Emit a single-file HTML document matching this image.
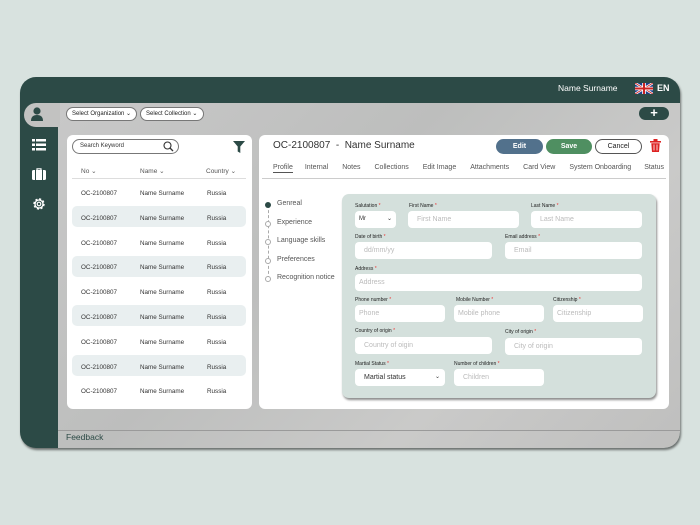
<!DOCTYPE html>
<html><head><style>
*{box-sizing:border-box;margin:0;padding:0}
body{width:700px;height:525px;background:#d8e2df;position:relative;font-family:"Liberation Sans",sans-serif;overflow:hidden}
.a{position:absolute}
.frame{left:20px;top:77px;width:660px;height:371px;background:#2c4a46;border-radius:16px;overflow:hidden;box-shadow:1px 2px 2px rgba(0,0,0,.5)}
.gray{left:38px;top:26px;width:622px;height:345px;background:linear-gradient(135deg,#c8c8c8,#bdbebd 40%,#cacac9 70%,#bfbfbe)}
.tab{left:4px;top:26px;width:36px;height:24px;background:#c2c2c1;border-radius:12px 0 0 12px}
.pill{height:14px;border:1px solid #777;border-radius:8px;background:#fff;font-size:6px;line-height:12px;padding-left:5px;color:#222}
.panel{background:#fff;border-radius:6px}
.t{font-size:6.5px;color:#333}
.row{left:72px;width:174px;height:21px;border-radius:5px}
.hl{background:#e9eff0}
.lbl{font-size:5px;color:#222}
.lbl b{color:#e33;font-weight:normal}
.in{background:#fff;border-radius:4px;height:17px;font-size:7px;color:#bbb;line-height:17px;padding-left:9px}
.btn{height:15px;border-radius:8px;font-size:7px;font-weight:bold;color:#fff;text-align:center;line-height:15px}
.col div{height:24.8px}
</style></head><body>
<div class="a frame">
 <div class="a gray"></div>
 <div class="a tab"></div>
 <div class="a" style="left:538px;top:6px;font-size:8.5px;color:#fff">Name Surname</div>
 <svg class="a" style="left:615px;top:6px" width="18" height="11" viewBox="0 0 18 11"><rect width="18" height="11" fill="#1f3f8a"/><path d="M0 0L18 11M18 0L0 11" stroke="#fff" stroke-width="2.4"/><path d="M0 0L18 11M18 0L0 11" stroke="#c22" stroke-width="0.9"/><path d="M9 0V11M0 5.5H18" stroke="#fff" stroke-width="3.6"/><path d="M9 0V11M0 5.5H18" stroke="#c22" stroke-width="2"/></svg>
 <div class="a" style="left:637px;top:6px;font-size:9px;color:#fff;font-weight:bold">EN</div>
 <div class="a" style="left:619px;top:30px;width:30px;height:13px;border-radius:7px;background:#2c4a46;color:#fff;font-size:13px;line-height:12px;text-align:center;font-weight:bold">+</div>
 <svg class="a" style="left:10px;top:29px" width="14" height="16" viewBox="0 0 14 16"><circle cx="7" cy="5" r="3.6" fill="#2c4a46"/><path d="M1 15Q1 9 7 9Q13 9 13 15Z" fill="#2c4a46"/></svg>
 <svg class="a" style="left:12px;top:62px" width="14" height="12" viewBox="0 0 14 12"><g fill="#fff"><rect x="0" y="0" width="3" height="2.5"/><rect x="4" y="0" width="10" height="2.5"/><rect x="0" y="4.5" width="3" height="2.5"/><rect x="4" y="4.5" width="10" height="2.5"/><rect x="0" y="9" width="3" height="2.5"/><rect x="4" y="9" width="10" height="2.5"/></g></svg>
 <svg class="a" style="left:12px;top:91px" width="14" height="12" viewBox="0 0 14 12"><path d="M5 2V0.8H9V2" stroke="#fff" fill="none" stroke-width="1.2"/><rect x="0" y="2" width="14" height="10" rx="1.5" fill="#fff"/><path d="M3.5 2V12M10.5 2V12" stroke="#2c4a46" stroke-width="1"/></svg>
 <svg class="a" style="left:12px;top:120px" width="14" height="14" viewBox="0 0 14 14"><circle cx="7" cy="7" r="4.6" fill="none" stroke="#fff" stroke-width="2.2" stroke-dasharray="2 1.6"/><circle cx="7" cy="7" r="4" fill="none" stroke="#fff" stroke-width="1.3"/><circle cx="7" cy="7" r="1.8" fill="none" stroke="#fff" stroke-width="1.2"/></svg>
 <div class="a" style="left:38px;top:353px;width:622px;height:1px;background:#9a9a9a"></div>
 <div class="a" style="left:46px;top:355px;font-size:8.5px;color:#2c4a46">Feedback</div>
</div>
<div class="a pill" style="left:66px;top:107px;width:71px">Select Organization &#8964;</div>
<div class="a pill" style="left:140px;top:107px;width:64px">Select Collection &#8964;</div>

<div class="a panel" style="left:67px;top:135px;width:185px;height:274px"></div>
<div class="a" style="left:72px;top:139px;width:107px;height:15px;border:1px solid #777;border-radius:8px;font-size:6px;line-height:13px;padding-left:7px;color:#333">Search Keyword</div>
<svg class="a" style="left:163px;top:141px" width="11" height="11" viewBox="0 0 11 11"><circle cx="4.5" cy="4.5" r="3.5" fill="none" stroke="#333" stroke-width="1.1"/><path d="M7 7L10 10" stroke="#333" stroke-width="1.3"/></svg>
<svg class="a" style="left:233px;top:141px" width="12" height="12" viewBox="0 0 12 12"><path d="M0 0H12L7.3 5.5V12L4.7 10.5V5.5Z" fill="#2c4a46"/></svg>
<div class="a t" style="left:81px;top:167px;color:#555">No &#8964;</div>
<div class="a t" style="left:140px;top:167px;color:#555">Name &#8964;</div>
<div class="a t" style="left:206px;top:167px;color:#555">Country &#8964;</div>
<div class="a" style="left:72px;top:178px;width:174px;height:1px;background:#ddd"></div>
<div class="a row hl" style="top:206px"></div>
<div class="a row hl" style="top:256px"></div>
<div class="a row hl" style="top:305px"></div>
<div class="a row hl" style="top:355px"></div>
<div class="a t col" style="left:81px;top:188px;line-height:12.4px;font-size:6.3px">
<div>OC-2100807</div><div>OC-2100807</div><div>OC-2100807</div><div>OC-2100807</div><div>OC-2100807</div><div>OC-2100807</div><div>OC-2100807</div><div>OC-2100807</div><div>OC-2100807</div></div>
<div class="a t col" style="left:140px;top:188px;line-height:12.4px;font-size:6.3px">
<div>Name Surname</div><div>Name Surname</div><div>Name Surname</div><div>Name Surname</div><div>Name Surname</div><div>Name Surname</div><div>Name Surname</div><div>Name Surname</div><div>Name Surname</div></div>
<div class="a t col" style="left:207px;top:188px;line-height:12.4px;font-size:6.3px">
<div>Russia</div><div>Russia</div><div>Russia</div><div>Russia</div><div>Russia</div><div>Russia</div><div>Russia</div><div>Russia</div><div>Russia</div></div>

<div class="a panel" style="left:259px;top:135px;width:410px;height:274px"></div>
<div class="a" style="left:273px;top:140px;font-size:10px;color:#333">OC-2100807 &nbsp;-&nbsp; Name Surname</div>
<div class="a btn" style="left:496px;top:139px;width:47px;background:#52718c">Edit</div>
<div class="a btn" style="left:546px;top:139px;width:46px;background:#4f8f61">Save</div>
<div class="a btn" style="left:595px;top:139px;width:47px;background:#fff;border:1px solid #555;color:#222;font-weight:normal;line-height:13px">Cancel</div>
<svg class="a" style="left:650px;top:139px" width="11" height="13" viewBox="0 0 11 13"><rect x="0" y="2" width="11" height="1.6" fill="#d22"/><rect x="3.5" y="0" width="4" height="2" fill="#d22"/><path d="M1.3 4.3H9.7L9 13H2Z" fill="#d22"/><path d="M4 5.5V11.5M7 5.5V11.5" stroke="#fff" stroke-width=".8"/></svg>
<div class="a" style="left:273px;top:164px;font-size:7px;color:#555;white-space:nowrap">
<span style="border-bottom:1px solid #555;padding-bottom:1px">Profile</span><span style="margin-left:12px">Internal</span><span style="margin-left:14px">Notes</span><span style="margin-left:14px">Collections</span><span style="margin-left:14px">Edit Image</span><span style="margin-left:14px">Attachments</span><span style="margin-left:14px">Card View</span><span style="margin-left:14px">System Onboarding</span><span style="margin-left:13px">Status</span></div>
<div class="a" style="left:262px;top:178px;width:404px;height:1px;background:#ccc"></div>
<div class="a" style="left:268px;top:205px;width:0;height:74px;border-left:1px dashed #aaa"></div>
<div class="a" style="left:265px;top:202px;width:6px;height:6px;border-radius:50%;background:#2c4a46"></div>
<div class="a" style="left:265px;top:221px;width:6px;height:6px;border-radius:50%;background:#fff;border:1px solid #aaa"></div>
<div class="a" style="left:265px;top:239px;width:6px;height:6px;border-radius:50%;background:#fff;border:1px solid #aaa"></div>
<div class="a" style="left:265px;top:258px;width:6px;height:6px;border-radius:50%;background:#fff;border:1px solid #aaa"></div>
<div class="a" style="left:265px;top:276px;width:6px;height:6px;border-radius:50%;background:#fff;border:1px solid #aaa"></div>
<div class="a" style="left:277px;top:195px;font-size:7px;color:#555;line-height:18.6px">Genreal<br>Experience<br>Language skills<br>Preferences<br>Recognition notice</div>
<div class="a" style="left:342px;top:194px;width:314px;height:204px;background:#d4e0dc;border-radius:7px;box-shadow:1px 2px 2px rgba(0,0,0,.45)"></div>
<div class="a lbl" style="left:355px;top:203px">Salutation <b>*</b></div>
<div class="a lbl" style="left:409px;top:203px">First Name <b>*</b></div>
<div class="a lbl" style="left:531px;top:203px">Last Name <b>*</b></div>
<div class="a in" style="left:355px;top:211px;width:41px;color:#333;font-size:6px;padding-left:4px">Mr<span style="float:right;margin-right:4px">&#8964;</span></div>
<div class="a in" style="left:408px;top:211px;width:111px">First Name</div>
<div class="a in" style="left:531px;top:211px;width:111px">Last Name</div>
<div class="a lbl" style="left:355px;top:234px">Date of birth <b>*</b></div>
<div class="a lbl" style="left:505px;top:234px">Email address <b>*</b></div>
<div class="a in" style="left:355px;top:242px;width:137px">dd/mm/yy</div>
<div class="a in" style="left:505px;top:242px;width:137px">Email</div>
<div class="a lbl" style="left:355px;top:266px">Address <b>*</b></div>
<div class="a in" style="left:355px;top:274px;width:287px;padding-left:4px">Address</div>
<div class="a lbl" style="left:355px;top:297px">Phone number <b>*</b></div>
<div class="a lbl" style="left:456px;top:297px">Mobile Number <b>*</b></div>
<div class="a lbl" style="left:553px;top:297px">Citizenship <b>*</b></div>
<div class="a in" style="left:355px;top:305px;width:90px;padding-left:4px">Phone</div>
<div class="a in" style="left:454px;top:305px;width:90px;padding-left:4px">Mobile phone</div>
<div class="a in" style="left:553px;top:305px;width:90px;padding-left:4px">Citizenship</div>
<div class="a lbl" style="left:355px;top:328px">Country of origin <b>*</b></div>
<div class="a lbl" style="left:505px;top:329px">City of origin <b>*</b></div>
<div class="a in" style="left:355px;top:337px;width:137px">Country of oigin</div>
<div class="a in" style="left:505px;top:338px;width:137px">City of origin</div>
<div class="a lbl" style="left:355px;top:361px">Martial Status <b>*</b></div>
<div class="a lbl" style="left:454px;top:361px">Number of children <b>*</b></div>
<div class="a in" style="left:355px;top:369px;width:90px;color:#333">Martial status<span style="float:right;margin-right:5px;font-size:6px">&#8964;</span></div>
<div class="a in" style="left:454px;top:369px;width:90px">Children</div>
</body></html>
